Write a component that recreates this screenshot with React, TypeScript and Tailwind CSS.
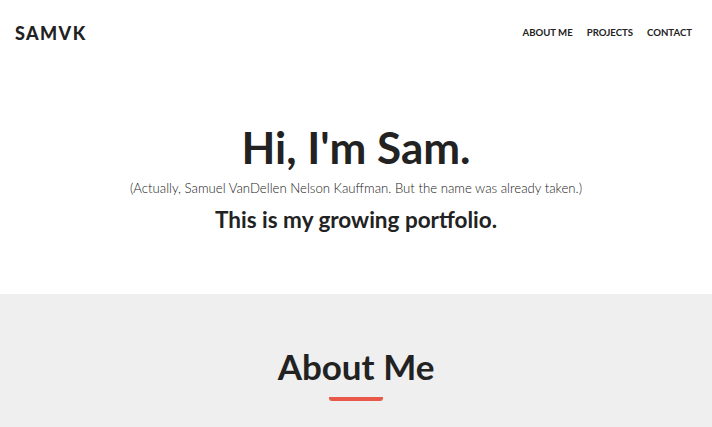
export default function App() {
  return (
    <div className="min-h-screen bg-white text-[#222] font-['Lato','Liberation_Sans',sans-serif]">
      <header className="flex items-center justify-between h-[67px] px-[15px]">
        <div className="text-[18px] font-black tracking-[1.4px]">SAMVK</div>
        <nav className="flex gap-[14px] pr-[5px] text-[9.6px] font-bold">
          <a>ABOUT ME</a>
          <a>PROJECTS</a>
          <a>CONTACT</a>
        </nav>
      </header>
      <section className="flex flex-col items-center pt-[58px] h-[227px]">
        <h1 className="text-[44px] font-bold leading-none">Hi, I'm Sam.</h1>
        <p className="mt-[10px] text-[13.2px] font-light text-[#222]">
          (Actually, Samuel VanDellen Nelson Kauffman. But the name was already taken.)
        </p>
        <h2 className="mt-[4px] text-[22.5px] font-bold">This is my growing portfolio.</h2>
      </section>
      <section className="bg-[#efefef] flex flex-col items-center pt-[55px] h-[133px]">
        <h2 className="text-[35px] font-bold leading-none">About Me</h2>
        <div className="mt-[13px] w-[54px] h-[4px] bg-[#e8594a] rounded-b-[3px]" />
      </section>
    </div>
  );
}
